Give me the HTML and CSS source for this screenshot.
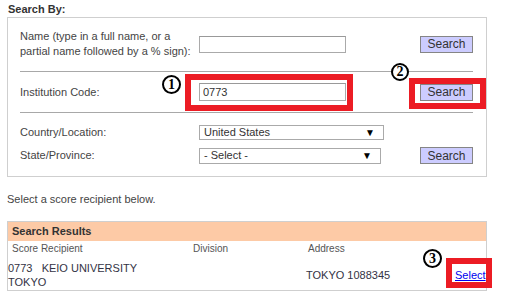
FILE: index.html
```html
<!DOCTYPE html>
<html lang="en">
<head>
<meta charset="utf-8">
<title>Search By</title>
<link rel="stylesheet" href="styles.css">
</head>
<body>
<div class="page">
  <h2 class="title">Search By:</h2>
  <div class="search-box">
    <div class="row row-name">
      <label class="lbl">Name (type in a full name, or a<br>partial name followed by a % sign):</label>
      <div class="field"><input class="text-input name-input" type="text"></div>
      <button class="btn">Search</button>
    </div>
    <div class="row row-code">
      <label class="lbl">Institution Code:</label>
      <div class="field">
        <span class="anchor">
          <span class="mark mark-1">1</span>
          <span class="hl hl-1"></span>
          <input class="text-input code-input" type="text" value="0773">
        </span>
      </div>
      <span class="anchor">
        <span class="mark mark-2">2</span>
        <span class="hl hl-2"></span>
        <button class="btn">Search</button>
      </span>
    </div>
    <div class="row row-loc">
      <label class="lbl">Country/Location:</label>
      <div class="field"><div class="select sel-country"><span>United States</span><span class="arrow">&#9660;</span></div></div>
      <span></span>
      <label class="lbl">State/Province:</label>
      <div class="field"><div class="select sel-state"><span>- Select -</span><span class="arrow">&#9660;</span></div></div>
      <button class="btn">Search</button>
    </div>
  </div>

  <p class="hint">Select a score recipient below.</p>

  <div class="results">
    <div class="results-head">Search Results</div>
    <div class="results-grid">
      <div class="col-h">Score Recipient</div>
      <div class="col-h">Division</div>
      <div class="col-h">Address</div>
      <div class="col-h"></div>
      <div class="cell name">0773&nbsp;&nbsp; KEIO UNIVERSITY<br>TOKYO</div>
      <div class="cell"></div>
      <div class="cell addr">TOKYO 1088345</div>
      <div class="cell pick">
        <span class="anchor">
          <span class="mark mark-3">3</span>
          <span class="hl hl-3"></span>
          <a href="#" class="sel-link">Select</a>
        </span>
      </div>
    </div>
  </div>
</div>
</body>
</html>
```

FILE: styles.css
```css
* { box-sizing: border-box; }
html, body { margin: 0; padding: 0; background: #fff; }
body {
  font-family: "Liberation Sans", Arial, sans-serif;
  font-size: 11px;
  color: #444;
  width: 513px;
  height: 296px;
  overflow: hidden;
}
.page { padding: 3px 0 0 7px; width: 500px; }
.title {
  margin: 0 0 1px 1px;
  font-size: 11px;
  line-height: 13px;
  font-weight: bold;
  color: #333;
}
.search-box {
  width: 480px;
  border: 1px solid #cfcfcf;
  padding: 0 13px 0 12px;
}
.row {
  display: grid;
  grid-template-columns: 179px 221px 53px;
  align-items: center;
}
.row + .row { border-top: 1px solid #a8a8a8; }
.row-name { padding: 11px 0 12px; }
.row-code { padding: 11px 0; }
.row-loc { padding: 12px 0; row-gap: 7px; }
.lbl { line-height: 15px; white-space: nowrap; color: #444; }
.field { display: flex; align-items: center; }
.anchor { position: relative; display: inline-block; }
.text-input {
  display: block;
  width: 147px;
  margin: 0;
  padding: 0 3px;
  border: 1px solid #aaa;
  border-top-color: #999;
  background: #fff;
  font: inherit;
  color: #333;
  outline: none;
}
.name-input { height: 17px; }
.code-input { height: 18px; }
.select {
  display: flex;
  justify-content: space-between;
  align-items: center;
  border: 1px solid #aaa;
  padding: 0 8px 0 4px;
  color: #333;
  background: #fff;
  line-height: 13px;
}
.sel-country { width: 185px; height: 15px; }
.sel-state { width: 182px; height: 16px; }
.arrow { font-size: 10px; color: #000; line-height: 10px; }
.btn {
  display: block;
  width: 53px;
  height: 17px;
  margin: 0;
  padding: 0;
  font: inherit;
  font-size: 12px;
  color: #333;
  background: #ccccff;
  border: 1px solid #858585;
  border-radius: 0;
}
.hint { margin: 16px 0 15px 0; line-height: 13px; color: #444; }
.results {
  width: 480px;
  border: 1px solid #cfcfcf;
  padding-bottom: 1px;
}
.results-head {
  background: #fdcaa6;
  height: 19px;
  line-height: 19px;
  padding-left: 4px;
  font-weight: bold;
  color: #333;
}
.results-grid {
  display: grid;
  grid-template-columns: 181px 115px 150px 1fr;
}
.col-h {
  font-size: 10px;
  line-height: 12px;
  padding: 2px 0 0 4px;
  color: #555;
}
.cell { margin-top: 6px; line-height: 14px; color: #334; }
.addr { align-self: center; padding-left: 2px; }
.pick { align-self: center; padding-left: 1px; }
.sel-link { color: #0000ee; text-decoration: underline; }

/* annotations overlaid on the page */
.hl {
  position: absolute;
  border: 6px solid #ec1c24;
  pointer-events: none;
}
.hl-1 { left: -14px; top: -9px; width: 168px; height: 37px; }
.hl-2 { left: -11px; top: -6px; width: 77px; height: 31px; }
.hl-3 { left: -9px; top: -10px; width: 46px; height: 30px; }
.mark {
  position: absolute;
  width: 19px;
  height: 19px;
  border: 2px solid #000;
  border-radius: 50%;
  background: #fff;
  color: #000;
  font-family: "Liberation Serif", serif;
  font-weight: bold;
  font-size: 14px;
  line-height: 15px;
  text-align: center;
}
.mark-1 { left: -37px; top: -8px; }
.mark-2 { left: -29px; top: -21px; width: 18px; height: 18px; line-height: 14px; }
.mark-3 { left: -32px; top: -19px; }
```
